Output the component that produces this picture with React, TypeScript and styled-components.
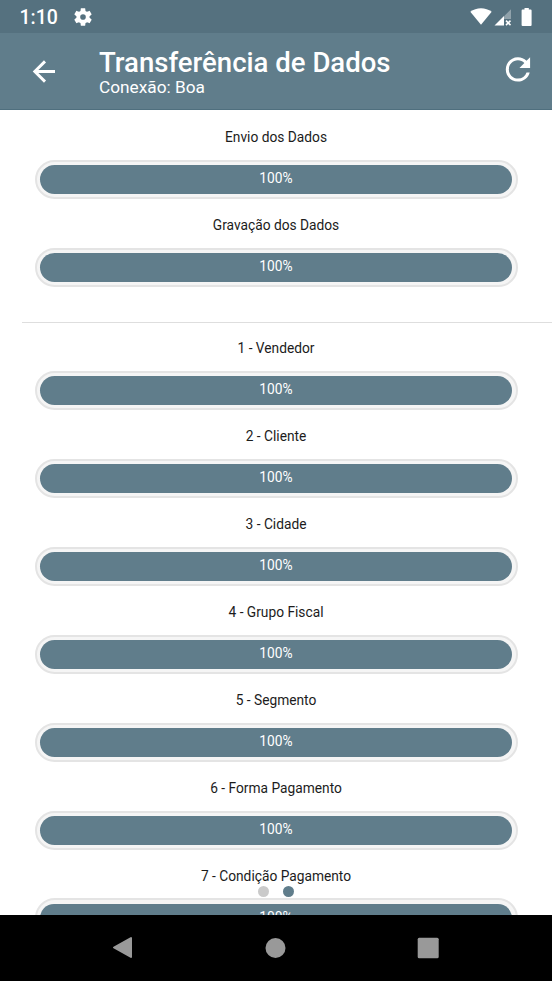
import React from 'react';
import styled, { createGlobalStyle } from 'styled-components';

const GlobalStyle = createGlobalStyle`
  * { box-sizing: border-box; }
  body { margin: 0; background: #fff; overflow: hidden; }
`;

const Screen = styled.div`
  width: 552px;
  height: 981px;
  display: flex;
  flex-direction: column;
  overflow: hidden;
  background: #fff;
  font-family: Roboto, sans-serif;
`;

const StatusBar = styled.div`
  flex: none;
  height: 33px;
  padding: 0 19px 0 19.5px;
  display: flex;
  align-items: center;
  background: #55717f;
  color: #fff;
`;

const Clock = styled.span`
  width: 53.5px;
  font-size: 19.5px;
  font-weight: 500;
  line-height: 33px;
  padding-top: 2px;
`;

const StatusIcons = styled.div`
  margin-left: auto;
  display: flex;
`;

const AppBar = styled.header`
  flex: none;
  height: 77px;
  padding: 0 20px 0 32px;
  display: flex;
  background: #607d8b;
  border-bottom: 1px solid #4f6f7e;
  color: #fff;
`;

const BarButton = styled.button<{ $top: number }>`
  display: block;
  height: 28px;
  margin: ${p => p.$top}px 0 0;
  padding: 0;
  border: 0;
  background: none;
  color: inherit;
`;

const Titles = styled.div`
  flex: 1;
  padding: 14px 0 0 43px;
`;

const Title = styled.h1`
  margin: 0;
  font-size: 27.55px;
  font-weight: 500;
  line-height: 31px;
  white-space: nowrap;
`;

const Subtitle = styled.div`
  font-size: 17.25px;
  line-height: 18px;
`;

const Content = styled.main`
  position: relative;
  flex: 1;
  min-height: 0;
  overflow: hidden;
  padding-top: 17px;
`;

const Divider = styled.hr`
  height: 1.3px;
  margin: 19px 0 15px 22px;
  border: 0;
  background: #dedede;
`;

const Row = styled.section`
  height: 87.93px;
  padding: 0 34.5px;
`;

const Label = styled.div`
  height: 32.8px;
  font-size: 13.75px;
  line-height: 20px;
  text-align: center;
  color: #1c1c1c;
`;

const Track = styled.div`
  height: 39.3px;
  padding: 3.3px;
  border: 2px solid #e4e4e4;
  border-radius: 20px;
  background: #f5f5f5;
`;

const Fill = styled.div`
  height: 28.7px;
  border-radius: 14.5px;
  background: #607d8b;
  color: #fff;
  font-size: 13.75px;
  line-height: 26px;
  text-align: center;
`;

const Pager = styled.div`
  position: absolute;
  left: 258px;
  bottom: 18px;
  display: flex;
  gap: 14px;
`;

const Dot = styled.span<{ $active?: boolean }>`
  width: 11px;
  height: 11px;
  border-radius: 50%;
  background: ${p => (p.$active ? '#607d8b' : '#cacaca')};
`;

const NavBar = styled.nav`
  flex: none;
  height: 66px;
  padding: 0 113px 0 112px;
  display: flex;
  justify-content: space-between;
  align-items: center;
  background: #000;
`;

const sendSteps = ['Envio dos Dados', 'Gravação dos Dados'];
const receiveSteps = [
  'Vendedor', 'Cliente', 'Cidade', 'Grupo Fiscal', 'Segmento', 'Forma Pagamento', 'Condição Pagamento',
];

const Progress = ({ label }: { label: string }) => (
  <Row>
    <Label>{label}</Label>
    <Track><Fill>100%</Fill></Track>
  </Row>
);

export default function App() {
  return (
    <Screen>
      <GlobalStyle />
      <StatusBar>
        <Clock>1:10</Clock>
        <svg width="20" height="20" viewBox="2 2 20 20" fill="#fff">
          <path d="M19.43 12.98c.04-.32.07-.64.07-.98s-.03-.66-.07-.98l2.11-1.65c.19-.15.24-.42.12-.64l-2-3.46c-.12-.22-.39-.3-.61-.22l-2.49 1c-.52-.4-1.08-.73-1.69-.98l-.38-2.65C14.46 2.18 14.25 2 14 2h-4c-.25 0-.46.18-.49.42l-.38 2.65c-.61.25-1.17.59-1.69.98l-2.49-1c-.23-.09-.49 0-.61.22l-2 3.46c-.13.22-.07.49.12.64l2.11 1.65c-.04.32-.07.65-.07.98s.03.66.07.98l-2.11 1.65c-.19.15-.24.42-.12.64l2 3.46c.12.22.39.3.61.22l2.49-1c.52.4 1.08.73 1.69.98l.38 2.65c.03.24.24.42.49.42h4c.25 0 .46-.18.49-.42l.38-2.65c.61-.25 1.17-.59 1.69-.98l2.49 1c.23.09.49 0 .61-.22l2-3.46c.12-.22.07-.49-.12-.64l-2.11-1.65zM12 15.2a3.2 3.2 0 1 1 0-6.4 3.2 3.2 0 0 1 0 6.4z" transform="translate(12 12) scale(.88) translate(-12 -12)" />
        </svg>
        <StatusIcons>
          <svg width="63" height="20" viewBox="0 0 63 20" fill="#fff">
            <path d="M0.3 4.8C6.3 0 15.7 0 21.7 4.8L11 17.8z" />
            <path d="M41 2.2V12h-7V9.2z" opacity=".35" />
            <path d="M34 9v9.5h-9.5z" />
            <path d="M36 13.6l4.5 4.5M40.5 13.6L36 18.1" stroke="#fff" strokeWidth="1.5" />
            <path d="M54.5 1h4.3v1.5h1.8q1 0 1 1v14.5q0 1-1 1h-8q-1 0-1-1v-14.5q0-1 1-1h1.9z" />
          </svg>
        </StatusIcons>
      </StatusBar>
      <AppBar>
        <BarButton $top={24} aria-label="Voltar">
          <svg width="24" height="28" viewBox="0 0 24 28" fill="none" stroke="#fff" strokeWidth="2.9">
            <path d="M23 14.5H3M13 4.4L2.8 14.5 13 24.6" />
          </svg>
        </BarButton>
        <Titles>
          <Title>Transferência de Dados</Title>
          <Subtitle>Conexão: Boa</Subtitle>
        </Titles>
        <BarButton $top={23} aria-label="Atualizar">
          <svg width="27" height="28" viewBox="0 0 27 28">
            <path d="M17.65 6.35A7.958 7.958 0 0 0 12 4c-4.42 0-7.99 3.58-7.99 8s3.57 8 7.99 8c3.73 0 6.84-2.55 7.73-6h-2.08A5.99 5.99 0 0 1 12 18c-3.31 0-6-2.69-6-6s2.69-6 6-6c1.66 0 3.14.69 4.22 1.78L13 11h7V4l-2.35 2.35z" fill="#fff" transform="translate(-5.3 -4.8) scale(1.52)" />
          </svg>
        </BarButton>
      </AppBar>
      <Content>
        {sendSteps.map(step => <Progress key={step} label={step} />)}
        <Divider />
        {receiveSteps.map((step, i) => <Progress key={step} label={`${i + 1} - ${step}`} />)}
        <Pager><Dot /><Dot $active /></Pager>
      </Content>
      <NavBar>
        <svg width="21" height="24" viewBox="0 0 21 24">
          <path d="M19 2v19L2 11.5z" fill="#999" stroke="#999" strokeWidth="2" strokeLinejoin="round" />
        </svg>
        <svg width="21" height="22" viewBox="0 0 21 22"><circle cx="10.5" cy="11" r="10" fill="#999" /></svg>
        <svg width="22" height="22" viewBox="0 0 22 22"><rect x=".7" y=".7" width="21" height="20.6" rx="1.5" fill="#999" /></svg>
      </NavBar>
    </Screen>
  );
}
